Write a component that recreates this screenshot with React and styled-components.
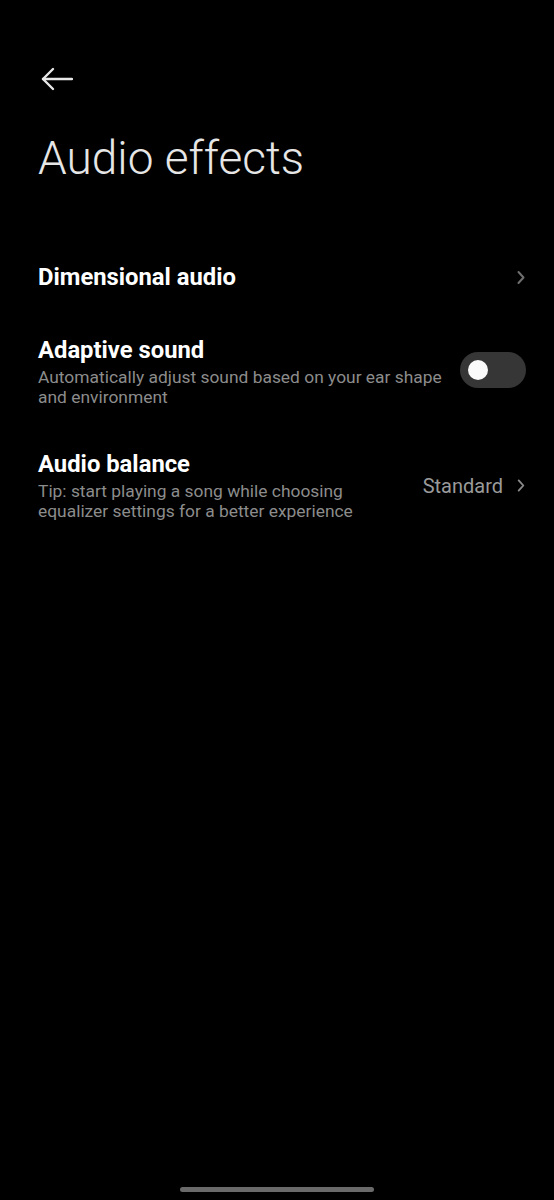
import React from "react";
import styled, { createGlobalStyle } from "styled-components";

const Global = createGlobalStyle`
  html, body { margin: 0; padding: 0; background: #000; }
  body { font-family: Roboto, "Noto Sans", sans-serif; -webkit-font-smoothing: antialiased; }
`;

const Screen = styled.div`
  width: 554px;
  height: 1200px;
  background: #000;
  color: #fff;
  display: flex;
  flex-direction: column;
  box-sizing: border-box;
  padding: 0 29px 0 38px;
  position: relative;
  overflow: hidden;
`;

const BackButton = styled.button`
  background: none;
  border: none;
  padding: 0;
  margin: 67px 0 0 3px;
  width: 32px;
  height: 24px;
  display: flex;
  align-items: center;
  color: #e8e8e8;
  cursor: pointer;
  align-self: flex-start;
`;

const Title = styled.h1`
  margin: 43px 0 59px 0;
  font-family: Roboto, sans-serif;
  font-weight: 300;
  font-size: 46px;
  line-height: 48px;
  color: #e6e6e6;
  letter-spacing: 0;
`;

const List = styled.div`
  display: flex;
  flex-direction: column;
`;

const Row = styled.div`
  display: flex;
  align-items: center;
  justify-content: space-between;
  padding: 22px 0 ${(p) => p.$bottom || "21px"} 0;
  gap: 10px;
`;

const Texts = styled.div`
  display: flex;
  flex-direction: column;
  flex: 1;
  min-width: 0;
`;

const RowTitle = styled.div`
  font-size: 23.8px;
  line-height: 28px;
  font-weight: 700;
  color: #fff;
`;

const RowSub = styled.div`
  margin-top: 3px;
  font-size: 17.4px;
  line-height: 20px;
  color: #8c8c8c;
  max-width: ${(p) => p.$max || "420px"};
`;

const Trailing = styled.div`
  display: flex;
  align-items: center;
  gap: 14px;
  flex-shrink: 0;
`;

const Value = styled.span`
  font-size: 20px;
  color: #9a9a9a;
`;

const Toggle = styled.div`
  width: 66px;
  height: 36px;
  border-radius: 18px;
  background: #363636;
  display: flex;
  align-items: center;
  padding-left: 8px;
  box-sizing: border-box;
  flex-shrink: 0;
  margin: -3px -1px 0 0;
`;

const Knob = styled.div`
  width: 20px;
  height: 20px;
  border-radius: 50%;
  background: #fafafa;
`;

const HomeBar = styled.div`
  position: absolute;
  left: 180px;
  bottom: 8px;
  width: 194px;
  height: 5px;
  border-radius: 3px;
  background: #6a6a6a;
`;

const Chevron = ({ h = 14, color = "#777" }) => (
  <svg width="8" height={h} viewBox="0 0 8 14" fill="none">
    <path d="M1.5 1.5 L6.5 7 L1.5 12.5" stroke={color} strokeWidth="2" strokeLinecap="round" strokeLinejoin="round" />
  </svg>
);

export default function App() {
  return (
    <>
      <Global />
      <Screen>
        <BackButton aria-label="Back">
          <svg width="32" height="24" viewBox="0 0 32 24" fill="none">
            <path d="M2 12 H31" stroke="#e8e8e8" strokeWidth="2.4" strokeLinecap="round" />
            <path d="M12 2 L2 12 L12 22" stroke="#e8e8e8" strokeWidth="2.4" strokeLinecap="round" strokeLinejoin="round" />
          </svg>
        </BackButton>
        <Title>Audio effects</Title>
        <List>
          <Row $bottom="23px">
            <Texts>
              <RowTitle>Dimensional audio</RowTitle>
            </Texts>
            <Trailing>
              <Chevron h={15} color="#6f6f6f" />
            </Trailing>
          </Row>
          <Row>
            <Texts>
              <RowTitle>Adaptive sound</RowTitle>
              <RowSub $max="414px">Automatically adjust sound based on your ear shape and environment</RowSub>
            </Texts>
            <Toggle>
              <Knob />
            </Toggle>
          </Row>
          <Row>
            <Texts>
              <RowTitle>Audio balance</RowTitle>
              <RowSub $max="340px">Tip: start playing a song while choosing equalizer settings for a better experience</RowSub>
            </Texts>
            <Trailing>
              <Value>Standard</Value>
              <Chevron h={13} color="#8a8a8a" />
            </Trailing>
          </Row>
        </List>
        <HomeBar />
      </Screen>
    </>
  );
}
